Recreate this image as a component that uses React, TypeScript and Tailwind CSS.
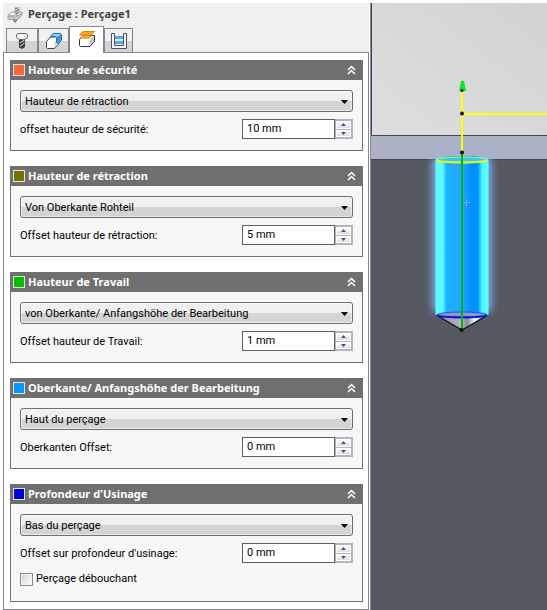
import { useId, useState } from "react";
import type { ReactNode } from "react";

type HeightGroup = {
  title: string;
  swatch: string;
  reference: string;
  offsetLabel: string;
  offset: number;
};

const REFERENCES = [
  "Hauteur de rétraction",
  "Von Oberkante Rohteil",
  "von Oberkante/ Anfangshöhe der Bearbeitung",
  "Haut du perçage",
  "Bas du perçage",
];

const GROUPS: HeightGroup[] = [
  {
    title: "Hauteur de sécurité",
    swatch: "bg-[#ff6633]",
    reference: REFERENCES[0],
    offsetLabel: "offset hauteur de sécurité:",
    offset: 10,
  },
  {
    title: "Hauteur de rétraction",
    swatch: "bg-[#737300]",
    reference: REFERENCES[1],
    offsetLabel: "Offset hauteur de rétraction:",
    offset: 5,
  },
  {
    title: "Hauteur de Travail",
    swatch: "bg-[#00c000]",
    reference: REFERENCES[2],
    offsetLabel: "Offset hauteur de Travail:",
    offset: 1,
  },
  {
    title: "Oberkante/ Anfangshöhe der Bearbeitung",
    swatch: "bg-[#0099ff]",
    reference: REFERENCES[3],
    offsetLabel: "Oberkanten Offset:",
    offset: 0,
  },
  {
    title: "Profondeur d'Usinage",
    swatch: "bg-[#0000dd]",
    reference: REFERENCES[4],
    offsetLabel: "Offset sur profondeur d'usinage:",
    offset: 0,
  },
];

function DrillIcon() {
  return (
    <svg width="16" height="18" viewBox="0 0 16 18" aria-hidden="true">
      <path d="M6 12h4v3l-2 2-2-2z" fill="#8a8a8a" />
      <path d="M1 9 5 6h10l-4 4H1z" fill="#eef1f5" stroke="#a4abb4" />
      <path d="M1 10h10l4-4v3l-4 4.500H2L1 12.500z" fill="#c3cad4" stroke="#98a0ab" />
      <path d="M8 1.500h4.500v4L10 9 7.500 7.500z" fill="#7c7c7c" />
      <path d="M8 4.500 12.500 2M8 7l4.500-2.500" stroke="#e4e4e4" />
    </svg>
  );
}

function ToolIcon() {
  return (
    <svg width="16" height="18" viewBox="0 0 16 18" aria-hidden="true">
      <path d="M5 7h6v8l-3 2-3-1.500z" fill="#3c3c3c" />
      <path d="M6 11l4.500-3M6 14.500l4.500-3.500" stroke="#e8e8e8" />
      <path
        d="M4 1.500h8l1.500 1v3L11 7.500H5L2.500 5.500v-3z"
        fill="#f8f8f8"
        stroke="#6a6a6a"
      />
      <path d="M11 2.500V7" stroke="#c4c4c4" />
    </svg>
  );
}

function GeometryIcon() {
  return (
    <svg width="18" height="18" viewBox="0 0 18 18" aria-hidden="true">
      <path
        d="M1.500 9.500 5.500 5H14v6.500L9.500 16.500h-7l-1-1z"
        fill="#fff"
        stroke="#3f444c"
      />
      <path d="M9.500 10v6l4-4.500V6z" fill="#d0d3d8" />
      <path
        d="M5.500 4.500 8 1.500h7.500l1 1v6L13.500 11.500l-2-1V5.500l-1-1z"
        fill="#8fd0f6"
        stroke="#1e6ca8"
      />
      <path d="M12 5v5.500l1.500.500 2.500-3V2.500z" fill="#3f97d0" />
    </svg>
  );
}

function HeightsIcon() {
  return (
    <svg width="18" height="18" viewBox="0 0 18 18" aria-hidden="true">
      <path
        d="M1.500 9.500 4.500 6 16.500 5.500v5.500L12 16.500H2.500l-1-1z"
        fill="#fff"
        stroke="#333"
      />
      <path d="M11.500 10v6l4.500-5V6z" fill="#c4c6ca" />
      <path d="M3.500 5.500h10l-2 2.500H2.500z" fill="#fbb040" />
      <path d="M2.500 8h9l2-2.500" fill="none" stroke="#d98200" />
      <path d="M1.500 5 5 1.500h11.500L13 5z" fill="#f9a825" stroke="#d98200" />
    </svg>
  );
}

function PassesIcon() {
  return (
    <svg width="18" height="18" viewBox="0 0 18 18" aria-hidden="true">
      <path d="M5 3h8v11H5z" fill="#e6f0f8" />
      <path d="M5 4h8v3H5zM5 9h8v3H5z" fill="#5ba6dc" />
      <path
        d="M1.500 1.500h3v12h9v-12h3v15h-15z"
        fill="#f6f7f9"
        stroke="#46536a"
      />
    </svg>
  );
}

const TABS: { label: string; icon: ReactNode }[] = [
  { label: "Outil", icon: <ToolIcon /> },
  { label: "Géométrie", icon: <GeometryIcon /> },
  { label: "Hauteurs", icon: <HeightsIcon /> },
  { label: "Passes", icon: <PassesIcon /> },
];

function TabBar() {
  const [active, setActive] = useState(2);

  return (
    <div role="tablist" className="flex h-[26px] items-end pl-[3px]">
      {TABS.map((tab, index) => (
        <button
          key={tab.label}
          type="button"
          role="tab"
          aria-label={tab.label}
          aria-selected={index === active}
          onClick={() => setActive(index)}
          className={
            index === active
              ? "relative -mb-px flex h-[27px] w-[35px] items-center justify-center border border-b-0 border-[#85858f] bg-white pb-[2px]"
              : "flex h-6 w-[31px] items-center justify-center border border-b-0 border-[#85858f] bg-linear-to-b from-[#f2f2f2] from-50% to-[#d4d4d4] to-50% first:w-8 last:w-[29px]"
          }
        >
          {tab.icon}
        </button>
      ))}
    </div>
  );
}

function OffsetInput({ id, initial }: { id: string; initial: number }) {
  const [value, setValue] = useState(`${initial} mm`);

  function step(delta: number) {
    setValue(`${(parseFloat(value) || 0) + delta} mm`);
  }

  return (
    <div className="flex h-5">
      <input
        id={id}
        type="text"
        value={value}
        onChange={(event) => setValue(event.target.value)}
        className="w-[93px] border border-[#606060] bg-white px-1 pb-px text-black"
      />
      <div className="flex w-[18px] flex-col gap-px border border-l-0 border-[#b4b4bc] bg-[#b4b4bc] p-px">
        <button
          type="button"
          aria-label="Augmenter"
          onClick={() => step(1)}
          className="flex flex-1 items-center justify-center border border-white bg-linear-to-b from-white to-[#dcdcdc]"
        >
          <svg width="5" height="3" viewBox="0 0 5 3" aria-hidden="true">
            <path d="M0 3 2.500 0 5 3z" fill="#3a52a0" />
          </svg>
        </button>
        <button
          type="button"
          aria-label="Diminuer"
          onClick={() => step(-1)}
          className="flex flex-1 items-center justify-center border border-white bg-linear-to-b from-white to-[#dcdcdc]"
        >
          <svg width="5" height="3" viewBox="0 0 5 3" aria-hidden="true">
            <path d="M0 0h5L2.500 3z" fill="#3a52a0" />
          </svg>
        </button>
      </div>
    </div>
  );
}

function Group({ group, children }: { group: HeightGroup; children?: ReactNode }) {
  const id = useId();
  const [open, setOpen] = useState(true);

  return (
    <section className="border border-[#6f6f6f] bg-[#f7f7f7]">
      <header className="flex h-[19px] items-center bg-[#6f6f6f] pr-[6px] pb-px pl-[2px]">
        <span className={`size-3 border border-[#e4e4e4] ${group.swatch}`} />
        <h2 className="ml-[3px] flex-1 font-['Noto_Sans',sans-serif] text-[11px] font-bold text-white">
          {group.title}
        </h2>
        <button
          type="button"
          aria-label={group.title}
          aria-expanded={open}
          onClick={() => setOpen(!open)}
        >
          <svg width="9" height="10" viewBox="0 0 9 10" aria-hidden="true">
            <path
              d="M1 5 4.500 1.500 8 5M1 9l3.500-3.500L8 9"
              fill="none"
              stroke="#fff"
              strokeWidth="1.500"
            />
          </svg>
        </button>
      </header>

      {open && (
        <div className="px-[9px] pt-[10px] pb-[11px]">
          <div className="relative">
            <select
              aria-label={group.title}
              defaultValue={group.reference}
              className="block h-[22px] w-full appearance-none rounded-[3px] border border-[#6f6f6f] bg-linear-to-b from-[#f0f0f0] from-50% to-[#d4d4d4] to-50% pt-px pr-5 pl-1 text-black shadow-[inset_0_0_0_1px_#ffffff80]"
            >
              {REFERENCES.map((reference) => (
                <option key={reference}>{reference}</option>
              ))}
            </select>
            <svg
              width="7"
              height="4"
              viewBox="0 0 7 4"
              aria-hidden="true"
              className="pointer-events-none absolute top-[10px] right-[5px]"
            >
              <path d="M0 0h7L3.500 4z" fill="#000" />
            </svg>
          </div>

          <div className="mt-[7px] flex items-center justify-between">
            <label htmlFor={id} className="pt-[2px]">
              {group.offsetLabel}
            </label>
            <OffsetInput id={id} initial={group.offset} />
          </div>

          {children}
        </div>
      )}
    </section>
  );
}

function HoleView() {
  return (
    <svg
      viewBox="371 3 176 607"
      preserveAspectRatio="xMinYMin slice"
      role="img"
      aria-label="Perçage1"
      className="min-w-0 flex-1 border-l border-[#858ba2] bg-[#555761]"
    >
      <defs>
        <linearGradient id="face" x1="0" y1="1" x2="1" y2="0">
          <stop offset="0" stopColor="#dedede" />
          <stop offset="1" stopColor="#d2d2d2" />
        </linearGradient>
        <linearGradient id="bore" x1="0" y1="0" x2="1" y2="0">
          <stop offset="0" stopColor="#5cffff" />
          <stop offset="0.140" stopColor="#5cf8ff" />
          <stop offset="0.200" stopColor="#1cb4ff" />
          <stop offset="0.500" stopColor="#22a4ff" />
          <stop offset="0.680" stopColor="#0090ff" />
          <stop offset="0.800" stopColor="#0494ff" />
          <stop offset="0.880" stopColor="#50f4ff" />
          <stop offset="1" stopColor="#5cffff" />
        </linearGradient>
        <linearGradient id="cone" x1="0" y1="0" x2="1" y2="0">
          <stop offset="0" stopColor="#8f909c" />
          <stop offset="0.500" stopColor="#b4b5c0" />
          <stop offset="0.600" stopColor="#85868f" />
          <stop offset="0.750" stopColor="#f4f4fa" />
          <stop offset="1" stopColor="#9a9ba6" />
        </linearGradient>
        <filter id="glow" x="-50%" y="-10%" width="200%" height="120%">
          <feGaussianBlur stdDeviation="4" />
        </filter>
      </defs>

      <path d="M371 3h176v133H371z" fill="url(#face)" />
      <path d="M371 136h176v24H371z" fill="#abb0c4" />
      <path
        d="M371.500 3v132.500H547M371 159.500h176"
        fill="none"
        stroke="#45464c"
      />

      <path d="M433 158h58v153h-58z" fill="#84bcff" filter="url(#glow)" />
      <path
        d="M435.500 160a26.500 4 0 0 1 53 0v154a26.500 4 0 0 1-53 0z"
        fill="url(#bore)"
      />
      <path d="M437 315h50l-25 15z" fill="url(#cone)" />
      <path d="M437 315.500 462 330l25-14.500" fill="none" stroke="#111" strokeWidth="1.200" />
      <ellipse cx="462" cy="315" rx="25" ry="3" fill="#8c9bb8" stroke="#2450f0" />
      <path d="M437 315c4 3 46 3 50 0" fill="none" stroke="#0a10e8" strokeWidth="2" />
      <ellipse cx="462" cy="160" rx="25" ry="3" fill="#30c8ff" stroke="#c8f040" />
      <path d="M437 160c4 3 46 3 50 0" fill="none" stroke="#f4f400" strokeWidth="2" />

      <path d="M462 153v176" stroke="#00b414" strokeWidth="2" />
      <path d="M462 90v62M462 114h85" stroke="#ffff00" strokeWidth="2" fill="none" />
      <path d="m461 81h3l2 10h-7z" fill="#00f020" />
      <circle cx="462" cy="90.500" r="1.500" fill="#111" />
      <circle cx="462" cy="113.500" r="2" fill="#111" />
      <circle cx="462" cy="152.500" r="2" fill="#111" />
      <circle cx="461.500" cy="330" r="2" fill="#111" />
      <path d="M463 202.500h7M466.500 199v7" stroke="#7aa0f0" />
    </svg>
  );
}

export default function App() {
  return (
    <main className="flex bg-white pt-[3px] pl-[3px] font-[Roboto,sans-serif] text-[11px] leading-4 text-black">
      <div className="mr-px w-[366px] shrink-0 bg-[#f0f0f0]">
        <div className="flex h-[23px] items-center gap-[5px] pl-1">
          <DrillIcon />
          <h1 className="pb-px font-['Noto_Sans',sans-serif] text-[11px] font-bold text-[#444]">
            Perçage : Perçage1
          </h1>
        </div>

        <TabBar />

        <form className="flex flex-col gap-[15px] border border-[#85858f] bg-white py-[7px] pr-[5px] pl-[6px]">
          {GROUPS.map((group, index) => (
            <Group key={group.title} group={group}>
              {index === GROUPS.length - 1 && (
                <label className="mt-2 mb-[3px] flex h-4 items-center gap-[3px]">
                  <input
                    type="checkbox"
                    className="size-[13px] appearance-none border border-[#8a8a8a] bg-linear-to-br from-[#cfd2d6] to-white shadow-[inset_0_0_0_1px_#f4f4f4] checked:bg-[#4a62a8]"
                  />
                  Perçage débouchant
                </label>
              )}
            </Group>
          ))}
        </form>
      </div>

      <HoleView />
    </main>
  );
}
